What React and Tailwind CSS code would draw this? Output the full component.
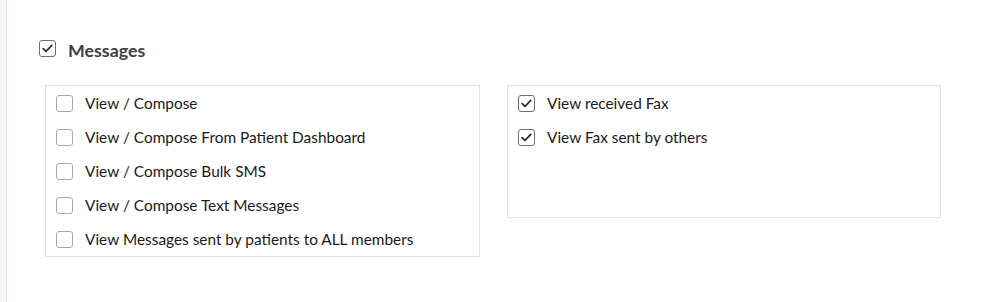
import React from 'react';

const Check = ({ checked }) => (
  <span
    className={`flex items-center justify-center w-[17px] h-[17px] rounded-[3px] border bg-white shrink-0 ${
      checked ? 'border-[#6f6f6f]' : 'border-[#a8a8a8]'
    }`}
  >
    {checked && (
      <svg width="11" height="9" viewBox="0 0 11 9" fill="none">
        <path d="M1.2 4.6L4 7.3L9.8 1.3" stroke="#2b2b2b" strokeWidth="1.7" strokeLinecap="round" strokeLinejoin="round" />
      </svg>
    )}
  </span>
);

const Row = ({ label, checked }) => (
  <label className="flex items-center h-[34px] gap-3 px-[10px]">
    <Check checked={checked} />
    <span className="mt-[2px] text-[15.4px] text-[#1a1a1a]">{label}</span>
  </label>
);

const App = () => {
  const left = [
    'View / Compose',
    'View / Compose From Patient Dashboard',
    'View / Compose Bulk SMS',
    'View / Compose Text Messages',
    'View Messages sent by patients to ALL members',
  ];
  const right = ['View received Fax', 'View Fax sent by others'];

  return (
    <div className="flex h-[302px] w-[1002px] bg-white" style={{ fontFamily: 'Lato, "Liberation Sans", sans-serif' }}>
      {/* side strip */}
      <div className="w-[7px] h-full bg-[#f3f5f9] border-r border-[#e6e8ee]" />

      <div className="flex-1 pl-[32px] pt-[40px]">
        {/* section header */}
        <div className="flex items-center gap-3 h-[17px]">
          <Check checked />
          <span className="mt-[3px] text-[17.8px] font-bold text-[#3f3f3f]">Messages</span>
        </div>

        <div className="flex items-start gap-[27px] mt-[28px] pl-[6px]">
          <div className="w-[435px] border border-[#e3e3e3]">
            {left.map((l) => (
              <Row key={l} label={l} />
            ))}
          </div>
          <div className="w-[434px] h-[133px] border border-[#e3e3e3]">
            {right.map((l) => (
              <Row key={l} label={l} checked />
            ))}
          </div>
        </div>
      </div>
    </div>
  );
};

export default App;
